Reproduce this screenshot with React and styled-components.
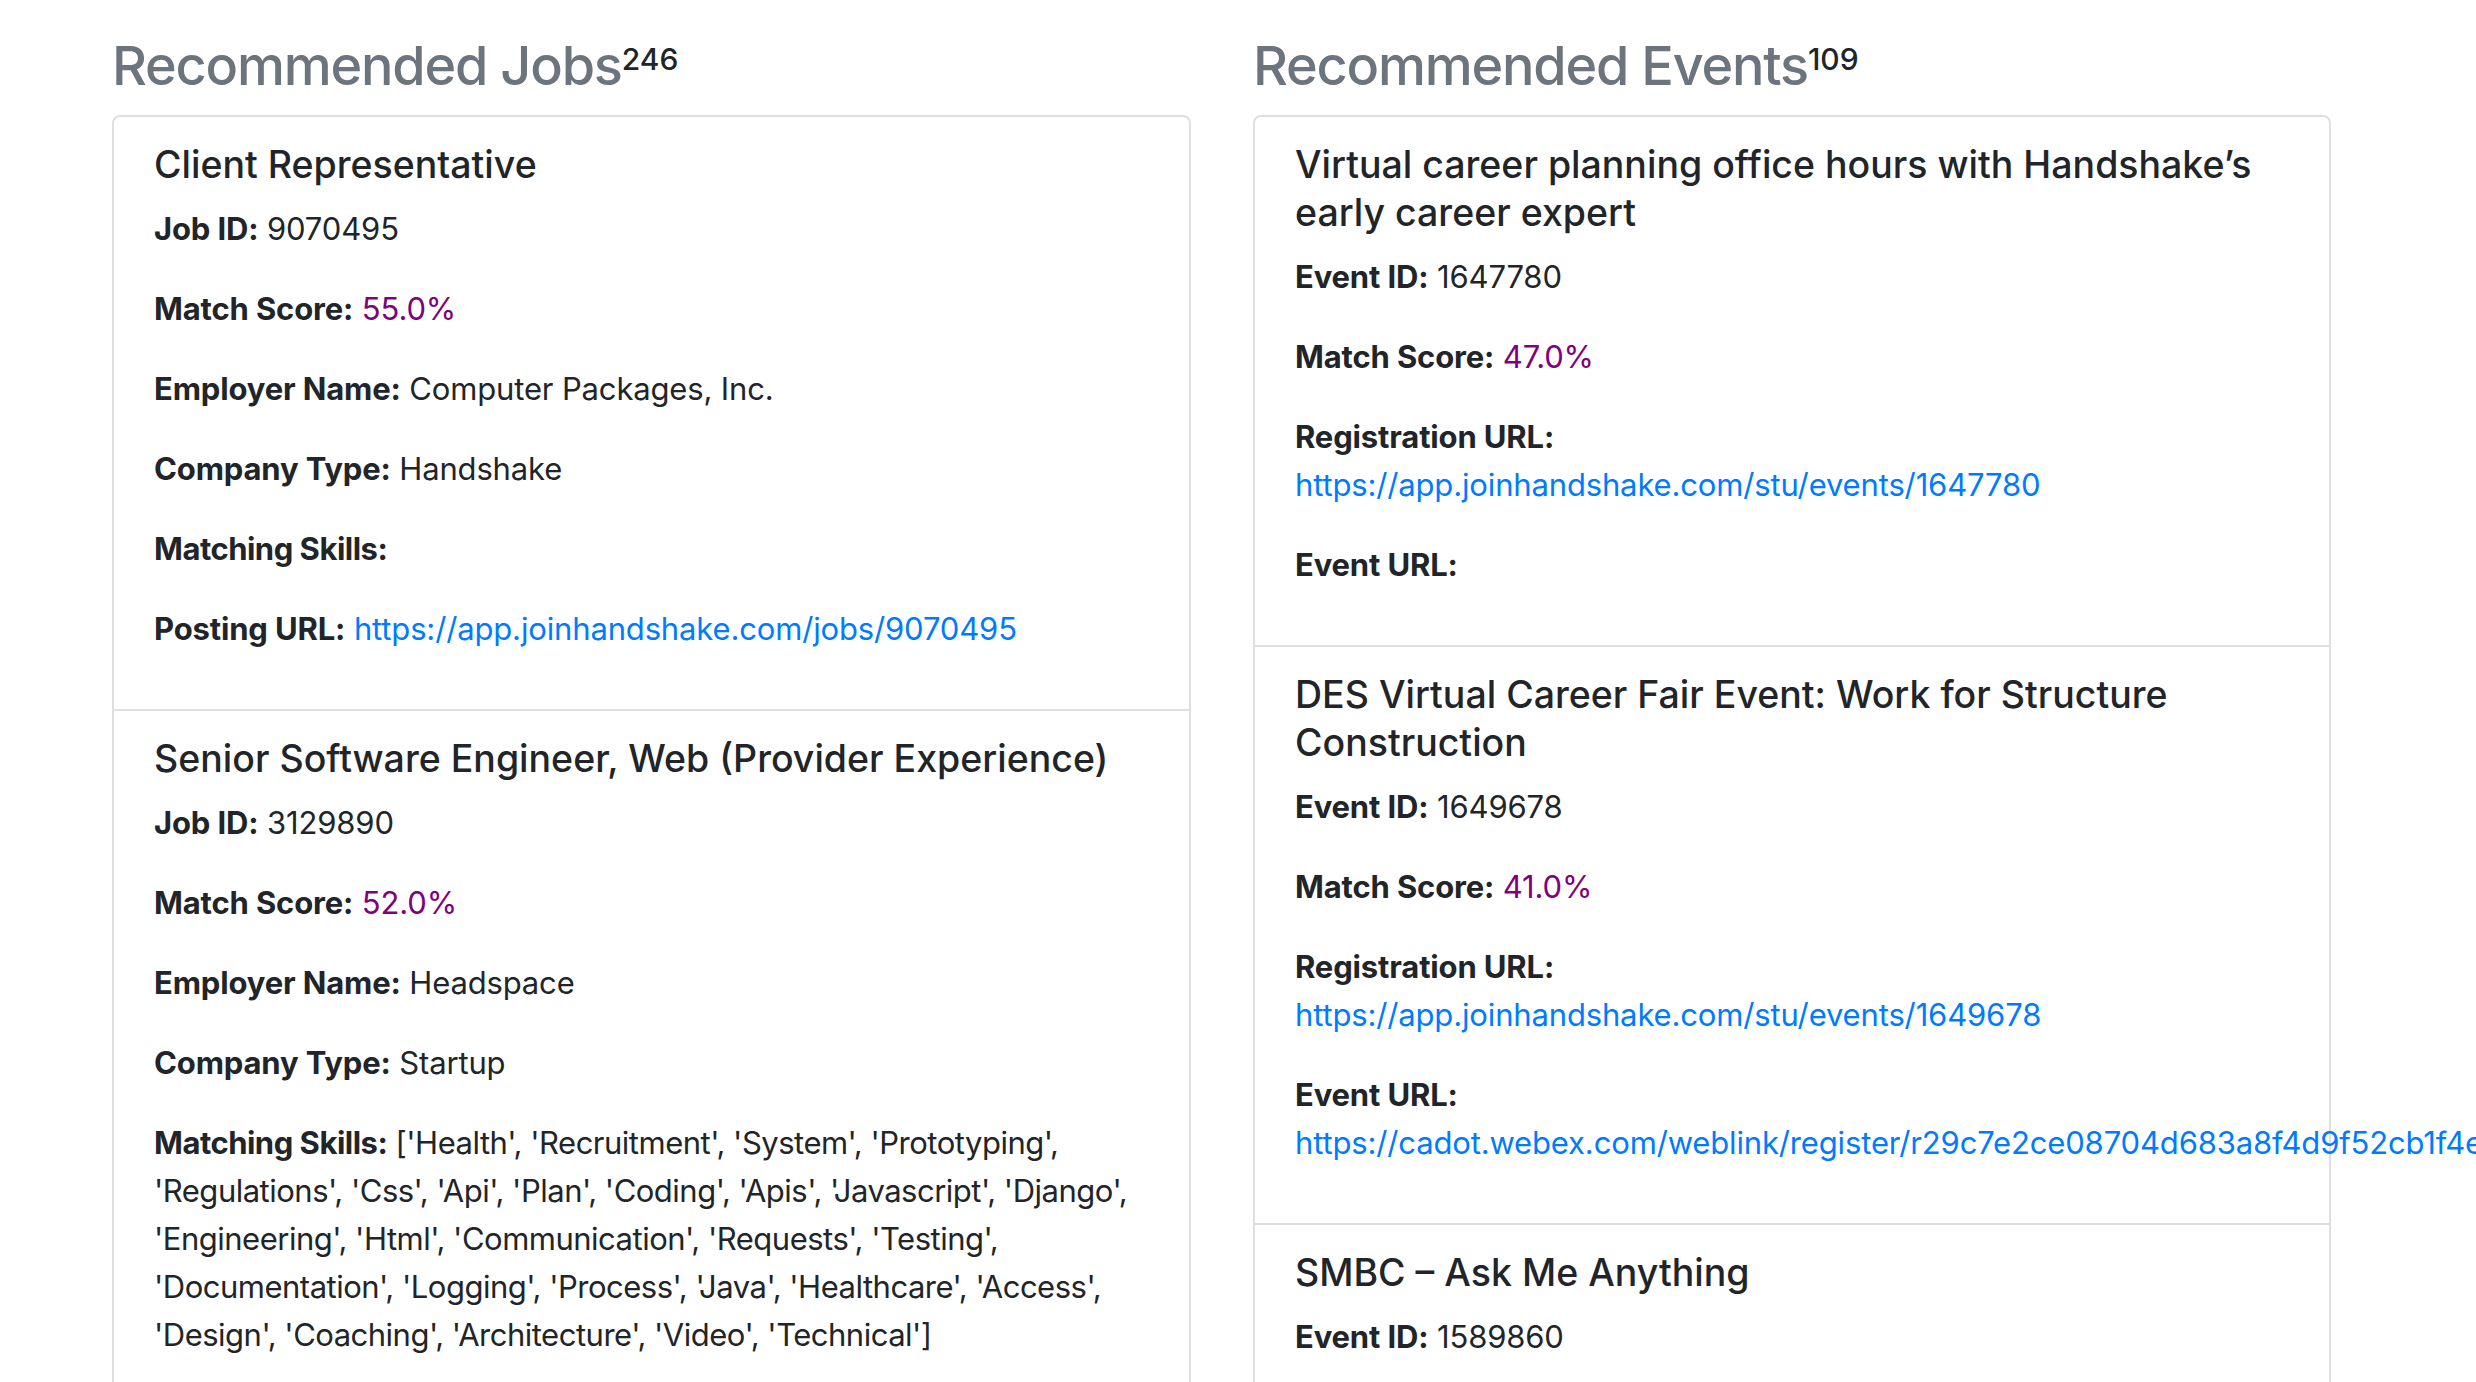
import styled, { createGlobalStyle } from "styled-components"

// Styles de base de la page
const GlobalStyle = createGlobalStyle`
    html, body {
        margin: 0;
        padding: 0;
        overflow: hidden;
        background: #ffffff;
    }
    body {
        font-family: Inter, "Noto Sans", "Liberation Sans", sans-serif;
        color: #212529;
    }
`

const Page = styled.main`
    display: grid;
    grid-template-columns: 1079px 1078px;
    column-gap: 62px;
    align-items: start;
    padding: 32px 0 0 112px;
`

const Column = styled.section`
    min-width: 0;
`

const Heading = styled.h3`
    margin: 0 0 16px 0;
    font-size: 54px;
    font-weight: 500;
    line-height: 67px;
    letter-spacing: -1.2px;
    color: #6c757d;
`

const Count = styled.sup`
    position: relative;
    top: -15px;
    vertical-align: baseline;
    line-height: 0;
    font-size: 30px;
    letter-spacing: 0;
    color: #212529;
`

const Card = styled.div`
    border: 2px solid rgba(0, 0, 0, 0.125);
    border-radius: 8px;
`

const Item = styled.div`
    padding: 24px 40px;
    border-bottom: 2px solid rgba(0, 0, 0, 0.125);
    &:last-child {
        border-bottom: none;
    }
`

const Title = styled.h5`
    margin: 0 0 16px 0;
    font-size: 37.5px;
    font-weight: 500;
    line-height: 48px;
`

// Le texte des compétences est un peu plus serré pour garder les mêmes retours à la ligne
const Field = styled.p`
    margin: 0 0 32px 0;
    font-size: 31px;
    line-height: 48px;
    letter-spacing: ${(props) => (props.$tight ? "-0.5px" : "-0.15px")};
`

const Label = styled.strong`
    font-weight: 700;
`

const Score = styled.span`
    color: #800080;
`

const Link = styled.a`
    color: #007bff;
    text-decoration: none;
`

const jobs = [
    {
        title: "Client Representative",
        id: "9070495",
        score: "55.0%",
        employer: "Computer Packages, Inc.",
        type: "Handshake",
        skills: "",
        url: "https://app.joinhandshake.com/jobs/9070495",
    },
    {
        title: "Senior Software Engineer, Web (Provider Experience)",
        id: "3129890",
        score: "52.0%",
        employer: "Headspace",
        type: "Startup",
        skills: "['Health', 'Recruitment', 'System', 'Prototyping', 'Regulations', 'Css', 'Api', 'Plan', 'Coding', 'Apis', 'Javascript', 'Django', 'Engineering', 'Html', 'Communication', 'Requests', 'Testing', 'Documentation', 'Logging', 'Process', 'Java', 'Healthcare', 'Access', 'Design', 'Coaching', 'Architecture', 'Video', 'Technical']",
        url: "https://app.joinhandshake.com/jobs/3129890",
    },
]

const events = [
    {
        title: "Virtual career planning office hours with Handshake\u2019s early career expert",
        id: "1647780",
        score: "47.0%",
        registration: "https://app.joinhandshake.com/stu/events/1647780",
        url: "",
    },
    {
        title: "DES Virtual Career Fair Event: Work for Structure Construction",
        id: "1649678",
        score: "41.0%",
        registration: "https://app.joinhandshake.com/stu/events/1649678",
        url: "https://cadot.webex.com/weblink/register/r29c7e2ce08704d683a8f4d9f52cb1f4e5a61d0c",
    },
    {
        title: "SMBC \u2013 Ask Me Anything",
        id: "1589860",
        score: "40.0%",
        registration: "https://app.joinhandshake.com/stu/events/1589860",
        url: "",
    },
]

function JobItem({ job }) {
    return (
        <Item>
            <Title>{job.title}</Title>
            <Field><Label>Job ID:</Label> {job.id}</Field>
            <Field><Label>Match Score:</Label> <Score>{job.score}</Score></Field>
            <Field><Label>Employer Name:</Label> {job.employer}</Field>
            <Field><Label>Company Type:</Label> {job.type}</Field>
            <Field $tight><Label>Matching Skills:</Label> {job.skills}</Field>
            <Field><Label>Posting URL:</Label> <Link href={job.url}>{job.url}</Link></Field>
        </Item>
    )
}

function EventItem({ event }) {
    return (
        <Item>
            <Title>{event.title}</Title>
            <Field><Label>Event ID:</Label> {event.id}</Field>
            <Field><Label>Match Score:</Label> <Score>{event.score}</Score></Field>
            <Field><Label>Registration URL:</Label> <Link href={event.registration}>{event.registration}</Link></Field>
            <Field><Label>Event URL:</Label> <Link href={event.url}>{event.url}</Link></Field>
        </Item>
    )
}

function App() {
    return (
        <>
            <GlobalStyle />
            <Page>
                <Column>
                    <Heading>Recommended Jobs<Count>246</Count></Heading>
                    <Card>
                        {jobs.map((job) => (
                            <JobItem key={job.id} job={job} />
                        ))}
                    </Card>
                </Column>
                <Column>
                    <Heading>Recommended Events<Count>109</Count></Heading>
                    <Card>
                        {events.map((event) => (
                            <EventItem key={event.id} event={event} />
                        ))}
                    </Card>
                </Column>
            </Page>
        </>
    )
}

export default App
